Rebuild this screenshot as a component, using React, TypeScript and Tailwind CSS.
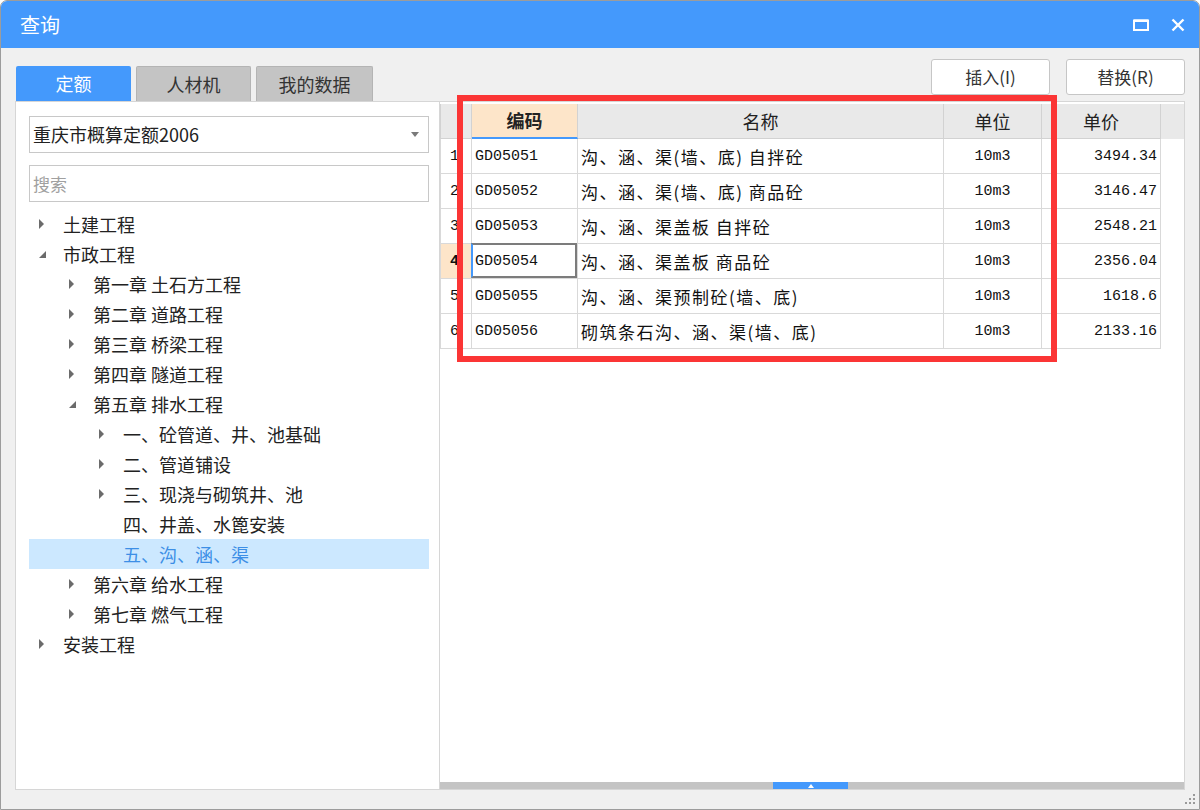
import React from 'react';

const ui = "font-['Noto_Sans_CJK_SC','Noto_Sans',sans-serif]";
const mono = "font-['Liberation_Mono','Noto_Sans_CJK_SC',monospace]";

type Node = { l: number; t: string; a?: 'c' | 'e'; sel?: boolean };

const tree: Node[] = [
  { l: 0, t: '土建工程', a: 'c' },
  { l: 0, t: '市政工程', a: 'e' },
  { l: 1, t: '第一章 土石方工程', a: 'c' },
  { l: 1, t: '第二章 道路工程', a: 'c' },
  { l: 1, t: '第三章 桥梁工程', a: 'c' },
  { l: 1, t: '第四章 隧道工程', a: 'c' },
  { l: 1, t: '第五章 排水工程', a: 'e' },
  { l: 2, t: '一、砼管道、井、池基础', a: 'c' },
  { l: 2, t: '二、管道铺设', a: 'c' },
  { l: 2, t: '三、现浇与砌筑井、池', a: 'c' },
  { l: 2, t: '四、井盖、水篦安装' },
  { l: 2, t: '五、沟、涵、渠', sel: true },
  { l: 1, t: '第六章 给水工程', a: 'c' },
  { l: 1, t: '第七章 燃气工程', a: 'c' },
  { l: 0, t: '安装工程', a: 'c' },
];

const rows = [
  ['GD05051', '沟、涵、渠(墙、底) 自拌砼', '10m3', '3494.34'],
  ['GD05052', '沟、涵、渠(墙、底) 商品砼', '10m3', '3146.47'],
  ['GD05053', '沟、涵、渠盖板 自拌砼', '10m3', '2548.21'],
  ['GD05054', '沟、涵、渠盖板 商品砼', '10m3', '2356.04'],
  ['GD05055', '沟、涵、渠预制砼(墙、底)', '10m3', '1618.6'],
  ['GD05056', '砌筑条石沟、涵、渠(墙、底)', '10m3', '2133.16'],
];

function Arrow({ a }: { a?: 'c' | 'e' }) {
  if (a === 'c')
    return (
      <svg width="6" height="10" viewBox="0 0 6 10">
        <polygon points="0,0 5,5 0,10" fill="#6b6b6b" />
      </svg>
    );
  if (a === 'e')
    return (
      <svg width="8" height="8" viewBox="0 0 8 8" className="mt-[2px]">
        <polygon points="7,0 7,7 0,7" fill="#6b6b6b" />
      </svg>
    );
  return null;
}

function TreeRow({ n }: { n: Node }) {
  return (
    <div
      className={`h-[30px] flex items-center text-[18px] ${n.sel ? 'bg-[#cce8ff] text-[#3d8fe6]' : 'text-[#222]'}`}
      style={{ paddingLeft: 10 + n.l * 30 }}
    >
      <div className="w-[24px] flex items-center">
        <Arrow a={n.a} />
      </div>
      <span className="whitespace-pre">{n.t}</span>
    </div>
  );
}

export default function App() {
  return (
    <div className={`relative w-[1200px] h-[810px] bg-white ${ui}`}>
      <div className="h-full flex flex-col border border-[#9c9c9c] rounded-t-[7px] overflow-hidden bg-[#f0f0f0]">
        {/* title bar */}
        <div className="h-[47px] shrink-0 bg-[#4499fc] flex items-center justify-between pl-[19px] pr-[14px]">
          <span className="text-white text-[20px] leading-none">查询</span>
          <div className="flex items-center gap-[22px]">
            <svg width="16" height="12" viewBox="0 0 16 12">
              <rect x="1" y="1.5" width="14" height="9.5" fill="none" stroke="#fff" strokeWidth="2" />
              <rect x="1" y="0.5" width="14" height="2.5" fill="#fff" />
            </svg>
            <svg width="14" height="14" viewBox="0 0 14 14">
              <path d="M1.5 1.5 L12.5 12.5 M12.5 1.5 L1.5 12.5" stroke="#fff" strokeWidth="2.4" />
            </svg>
          </div>
        </div>

        {/* body */}
        <div className="flex-1 flex flex-col pt-[11px] pl-[14px] pr-[14px] pb-[19px]">
          <div className="h-[42px] shrink-0 flex justify-between items-start">
            <div className="self-end flex gap-[5px] pl-[1px]">
              <div className="w-[115px] h-[35px] bg-[#4499fc] text-white text-[18px] flex items-center justify-center rounded-t-[2px]">定额</div>
              <div className="w-[115px] h-[35px] bg-[#c4c4c4] border border-b-0 border-[#b4b4b4] text-[#333] text-[18px] flex items-center justify-center rounded-t-[2px]">人材机</div>
              <div className="w-[117px] h-[35px] bg-[#c4c4c4] border border-b-0 border-[#b4b4b4] text-[#333] text-[18px] flex items-center justify-center rounded-t-[2px]">我的数据</div>
            </div>
            <div className="flex gap-[16px]">
              <button className="w-[119px] h-[36px] bg-white border border-[#c6c6c6] rounded-[3px] text-[17px] text-[#333]">插入(I)</button>
              <button className="w-[119px] h-[36px] bg-white border border-[#c6c6c6] rounded-[3px] text-[17px] text-[#333]">替换(R)</button>
            </div>
          </div>

          <div className="flex-1 flex">
            {/* left panel */}
            <div className="w-[425px] bg-white border border-[#d6d6d6] pl-[13px] pr-[10px] pt-[14px]">
              <div className="h-[37px] border border-[#c8c8c8] flex items-center justify-between pl-[3px] pr-[9px]">
                <span className="text-[18px] text-[#222]">重庆市概算定额2006</span>
                <svg width="8" height="5" viewBox="0 0 8 5">
                  <polygon points="0,0 8,0 4,5" fill="#7a7a7a" />
                </svg>
              </div>
              <div className="h-[37px] mt-[12px] border border-[#c8c8c8] flex items-center pl-[3px]">
                <span className="text-[17px] text-[#a0a0a0]">搜索</span>
              </div>
              <div className="mt-[7px]">
                {tree.map((n, i) => (
                  <TreeRow key={i} n={n} />
                ))}
              </div>
            </div>

            {/* right panel */}
            <div className="flex-1 bg-white border border-l-0 border-[#d6d6d6] flex flex-col">
              <div className="flex-1 pt-[2px]">
                <div className="flex h-[35px] bg-[#e9e9e9] text-[18px] text-[#222]">
                  <div className="w-[32px] border-l border-r border-b border-[#d2d2d2]" />
                  <div className="w-[106px] bg-[#fde5c9] border-r border-[#d2d2d2] border-b-2 border-b-[#4499fc] flex items-center justify-center font-bold">编码</div>
                  <div className="w-[366px] border-r border-b border-[#d2d2d2] flex items-center justify-center">名称</div>
                  <div className="w-[98px] border-r border-b border-[#d2d2d2] flex items-center justify-center">单位</div>
                  <div className="w-[119px] border-r border-b border-[#d2d2d2] flex items-center justify-center">单价</div>
                </div>
                {rows.map((r, i) => {
                  const sel = i === 3;
                  return (
                    <div key={i} className="flex h-[35px] text-[#111]">
                      <div className={`w-[32px] border-l border-r border-b border-[#d9d9d9] flex items-center justify-end pr-[12px] pt-[2px] text-[15px] ${mono} ${sel ? 'bg-[#fde5c9] font-bold' : ''}`}>{i + 1}</div>
                      <div className={`relative w-[106px] border-r border-b border-[#d9d9d9] flex items-center pl-[3px] pt-[2px] text-[15px] ${mono}`}>
                        {r[0]}
                        {sel && <div className="absolute -left-[1px] -top-[1px] right-0 bottom-0 border-2 border-[#7c7c7c] border-l-[#4499fc]" />}
                      </div>
                      <div className="w-[366px] border-r border-b border-[#d9d9d9] flex items-center pl-[3px] pt-[1px] text-[17px] tracking-[1.5px] whitespace-pre">{r[1]}</div>
                      <div className={`w-[98px] border-r border-b border-[#d9d9d9] flex items-center justify-center pt-[2px] text-[15px] ${mono}`}>{r[2]}</div>
                      <div className={`w-[119px] border-r border-b border-[#d9d9d9] flex items-center justify-end pr-[3px] pt-[2px] text-[15px] ${mono}`}>{r[3]}</div>
                    </div>
                  );
                })}
              </div>
              <div className="h-[7px] bg-[#c4c4c4] flex">
                <div className="w-[333px]" />
                <div className="w-[75px] bg-[#4499fc] flex items-center justify-center">
                  <svg width="6" height="4" viewBox="0 0 6 4">
                    <polygon points="3,0 6,4 0,4" fill="#fff" />
                  </svg>
                </div>
              </div>
            </div>
          </div>
        </div>
      </div>

      {/* resize grip */}
      <svg className="absolute right-[4px] bottom-[5px]" width="12" height="12" viewBox="0 0 12 12">
        <rect x="9" y="1" width="2" height="2" fill="#9a9a9a" />
        <rect x="5" y="5" width="2" height="2" fill="#9a9a9a" />
        <rect x="9" y="5" width="2" height="2" fill="#9a9a9a" />
        <rect x="1" y="9" width="2" height="2" fill="#9a9a9a" />
        <rect x="5" y="9" width="2" height="2" fill="#9a9a9a" />
        <rect x="9" y="9" width="2" height="2" fill="#9a9a9a" />
      </svg>

      {/* red annotation frame */}
      <div className="absolute left-[457px] top-[95px] w-[600px] h-[267px] border-[6px] border-[#fb3535]" />
    </div>
  );
}
